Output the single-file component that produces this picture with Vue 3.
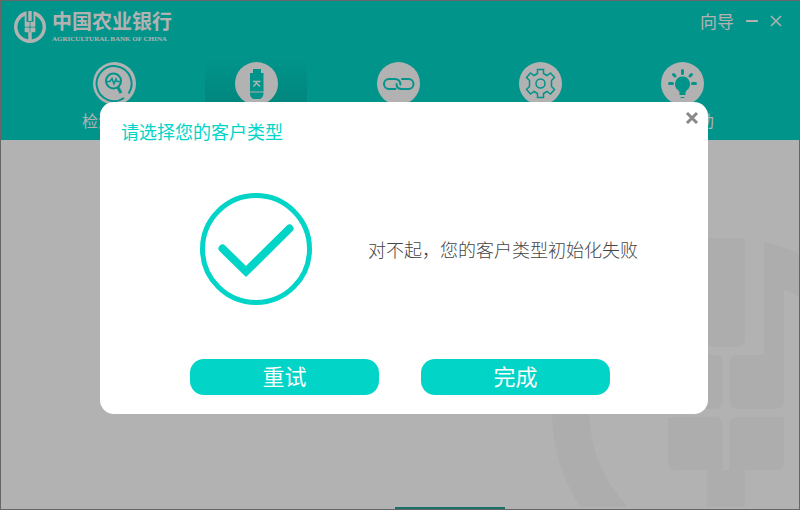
<script setup>
import { ref } from 'vue'

const active = ref('kbao')
const tabs = [
  { id: 'check', label: '检测修复' },
  { id: 'kbao', label: 'K宝管理' },
  { id: 'links', label: '常用网址' },
  { id: 'settings', label: '系统设置' },
  { id: 'help', label: '使用帮助' }
]
</script>

<template>
  <div class="window">
    <svg class="defs" aria-hidden="true">
      <defs>
        <symbol id="emblem" viewBox="-174 -174 348 348">
          <path d="M38 -170A174 174 0 0 1 174 0A174 174 0 0 1 -174 0A174 174 0 0 1 -38 -170V-57H-11Q-3.500 -57 -3.500 -49V-11Q-3.500 -3 -11 -3H-50Q-58 -3 -58 -11V-123A136 136 0 0 0 -19 135V58H-50Q-58 58 -58 50V5H-11Q-3.500 5 -3.500 13V58H3.500V13Q3.500 5 11 5H58V50Q58 58 50 58H19V135A136 136 0 0 0 58 -123V-11Q58 -3 50 -3H11Q3.500 -3 3.500 -11V-49Q3.500 -57 11 -57H38Z" />
          <path d="M-19 -174H19V-73Q19 -65 11 -65H-11Q-19 -65 -19 -73Z" />
        </symbol>
      </defs>
    </svg>

    <header class="header">
      <div class="topbar">
        <div class="brand">
          <svg class="brand-mark" aria-hidden="true"><use href="#emblem" /></svg>
          <div class="brand-text">
            <span class="brand-cn">中国农业银行</span>
            <span class="brand-en">AGRICULTURAL BANK OF CHINA</span>
          </div>
        </div>
        <div class="controls">
          <a class="guide" href="#">向导</a>
          <button class="control" type="button" aria-label="最小化">
            <svg width="12" height="12" viewBox="0 0 12 12"><path d="M0 6H12" stroke="currentColor" stroke-width="2" /></svg>
          </button>
          <button class="control" type="button" aria-label="关闭窗口">
            <svg width="12" height="12" viewBox="0 0 12 12"><path d="M1 1L11 11M11 1L1 11" stroke="currentColor" stroke-width="1.500" /></svg>
          </button>
        </div>
      </div>

      <nav class="tabs">
        <button
          v-for="tab in tabs"
          :key="tab.id"
          type="button"
          class="tab"
          :class="{ active: tab.id === active }"
          @click="active = tab.id"
        >
          <svg class="tab-icon" viewBox="0 0 43 43" fill="none" aria-hidden="true">
            <circle cx="21.500" cy="21.500" r="21.500" fill="#fff" />
            <g v-if="tab.id === 'check'" stroke="#02d4c7">
              <path d="M35.500 31.500A17.500 17.500 0 1 0 31 36" stroke-width="2" />
              <circle cx="20.500" cy="19" r="7.500" stroke-width="2" />
              <path d="M25 25.500L28 31" stroke-width="3" />
              <path d="M14 19.500H17L19 16.500L21 22L23 17L24 19.500H27" stroke-width="1.500" />
            </g>
            <g v-else-if="tab.id === 'kbao'">
              <path d="M18 7H26V11H28.500V29.500H15V11H18Z" fill="#02d4c7" />
              <path d="M15 30.500H28.500V31C28.500 35 26 37 23.500 37H20C17 37 15 35 15 31Z" fill="#02d4c7" />
              <path d="M18 19.500H25.500M21.500 19.500V21L18.500 24.500M21.500 21L25 24.500" stroke="#fff" stroke-width="1.500" />
            </g>
            <g v-else-if="tab.id === 'links'" stroke="#02d4c7" stroke-width="2" stroke-linecap="round">
              <path d="M18.500 27H12A5 5 0 0 1 12 17H18C21 17 23 19 23.500 22.500" />
              <path d="M25 17H31.500A5 5 0 0 1 31.500 27H25C22 27 19.500 25.500 19.500 22" />
            </g>
            <g v-else-if="tab.id === 'settings'" stroke="#02d4c7" stroke-width="1.500">
              <path d="M18.500 7.500H24.500V11.500L28 13.500L31.500 11L35.500 15.500L32.500 18.500V24.500L35.500 27.500L31.500 32L28 29.500L24.500 31.500V35.500H18.500V31.500L15 29.500L11.500 32L7.500 27.500L10.500 24.500V18.500L7.500 15.500L11.500 11L15 13.500L18.500 11.500Z" />
              <circle cx="21.500" cy="21.500" r="4.500" />
            </g>
            <g v-else stroke="#02d4c7" stroke-width="3" stroke-linecap="round">
              <path d="M21.500 14.500A7.500 7.500 0 0 1 26 28L24.500 30V33H18.500V30L17 28A7.500 7.500 0 0 1 21.500 14.500Z" fill="#02d4c7" stroke="none" />
              <path d="M20 35.500H23" stroke-width="1" />
              <path d="M21.500 8.500V11.500M12.500 12.500L14 14M30.500 12.500L29 14M8.500 21.500H11.500M31.500 21.500H34.500" />
            </g>
          </svg>
          <span class="tab-label">{{ tab.label }}</span>
        </button>
      </nav>
    </header>

    <main class="content">
      <svg class="watermark" viewBox="-174 -174 247 269" aria-hidden="true">
        <use href="#emblem" x="-174" y="-174" width="348" height="348" />
      </svg>
      <div class="progress"></div>
    </main>

    <div class="overlay">
      <section class="dialog" role="dialog" aria-modal="true" aria-labelledby="dialog-title">
        <div class="dialog-head">
          <h1 id="dialog-title" class="dialog-title">请选择您的客户类型</h1>
          <button class="close" type="button" aria-label="关闭">
            <svg width="14" height="14" viewBox="0 0 14 14"><path d="M2 2L12 12M12 2L2 12" stroke="currentColor" stroke-width="3" /></svg>
          </button>
        </div>
        <div class="dialog-body">
          <svg class="tick" viewBox="0 0 112 112" fill="none" stroke="#02d4c7" aria-hidden="true">
            <circle cx="56" cy="56" r="53.500" stroke-width="5" />
            <path d="M22.500 55.500L46 78.500L89.500 35.500" stroke-width="8" stroke-linecap="round" />
          </svg>
          <p class="message">对不起，您的客户类型初始化失败</p>
        </div>
        <div class="actions">
          <button class="action" type="button">重试</button>
          <button class="action" type="button">完成</button>
        </div>
      </section>
    </div>
  </div>
</template>

<style>
body {
  margin: 0;
}
</style>

<style scoped>
.window {
  position: relative;
  display: flex;
  flex-direction: column;
  box-sizing: border-box;
  min-height: 100vh;
  border: 1px solid #666;
  background: #fff;
  font-family: "Noto Sans CJK SC", sans-serif;
  overflow: hidden;
}
button {
  padding: 0;
  border: 0;
  background: none;
  color: inherit;
  font-family: inherit;
  cursor: pointer;
}
svg {
  display: block;
}
.defs {
  position: absolute;
  width: 0;
  height: 0;
}
.header {
  background: #02d4c7;
  color: #fff;
}
.topbar {
  display: flex;
  justify-content: space-between;
  padding: 8px 17px 0 13px;
}
.brand {
  display: flex;
  align-items: center;
  gap: 6px;
}
.brand-mark {
  width: 32px;
  height: 32px;
  fill: currentColor;
}
.brand-text {
  display: flex;
  flex-direction: column;
}
.brand-cn {
  font-size: 20px;
  line-height: 24px;
  font-weight: 700;
}
.brand-en {
  font-family: "Liberation Serif", serif;
  font-size: 7px;
  line-height: 12px;
  font-weight: 700;
}
.controls {
  display: flex;
  align-items: center;
  gap: 12px;
  height: 24px;
}
.guide {
  color: inherit;
  font-size: 17px;
  line-height: 24px;
  text-decoration: none;
}
.tabs {
  display: grid;
  grid-template-columns: repeat(5, 1fr);
  gap: 40px;
  padding: 12px 66px 0 62px;
}
.tab {
  display: flex;
  flex-direction: column;
  align-items: center;
  gap: 3px;
  padding: 5px 0 8px;
}
.tab.active {
  background: linear-gradient(transparent, rgba(0, 0, 0, 0.16));
}
.tab-icon {
  width: 43px;
  height: 43px;
}
.tab-label {
  font-size: 16px;
  line-height: 24px;
}
.content {
  display: flex;
  flex: 1;
  flex-direction: column;
  justify-content: flex-end;
}
.watermark {
  align-self: flex-end;
  width: 247px;
  height: 269px;
  fill: #f8f8f8;
}
.progress {
  width: 110px;
  height: 2px;
  margin-left: 394px;
  background: #26a396;
}
.overlay {
  position: absolute;
  inset: 0;
  display: flex;
  align-items: center;
  justify-content: center;
  padding: 6px 0 0 8px;
  background: rgba(0, 0, 0, 0.3);
}
.dialog {
  box-sizing: border-box;
  width: 77%;
  max-width: 608px;
  border-radius: 14px;
  background: #fff;
}
.dialog-head {
  display: flex;
  justify-content: space-between;
  align-items: flex-start;
  padding: 9px 9px 0 21px;
}
.dialog-title {
  margin: 0;
  padding-top: 7px;
  color: #02d4c7;
  font-size: 18px;
  line-height: 26px;
  font-weight: 400;
}
.close {
  color: #888;
}
.dialog-body {
  display: flex;
  align-items: center;
  gap: 56px;
  padding: 49px 60px 54px 100px;
}
.tick {
  flex: none;
  width: 112px;
  height: 112px;
}
.message {
  margin: 0;
  color: #444;
  font-size: 18px;
  line-height: 26px;
  font-weight: 300;
}
.actions {
  display: flex;
  justify-content: center;
  gap: 42px;
  padding: 0 98px 19px 90px;
}
.action {
  flex: 1;
  height: 36px;
  padding-bottom: 4px;
  border-radius: 14px;
  background: #02d4c7;
  color: #fff;
  font-size: 22px;
  line-height: 32px;
}
</style>
